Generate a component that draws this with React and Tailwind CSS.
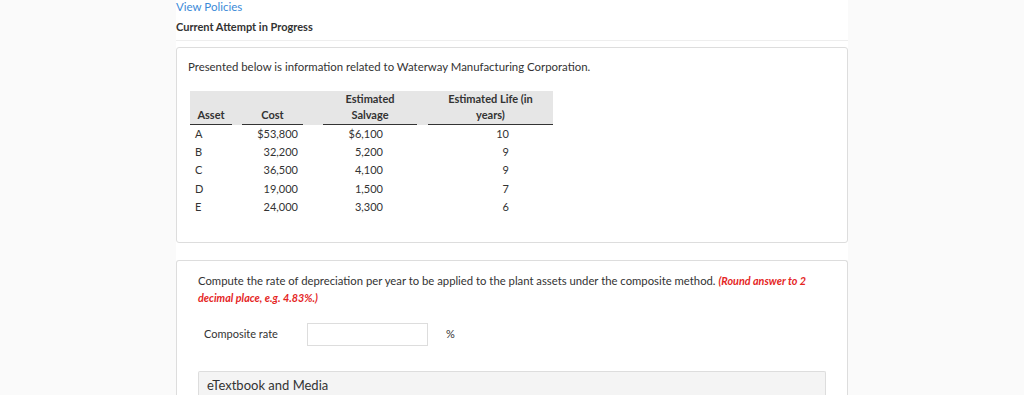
import React from 'react'

const rows = [
  { asset: 'A', cost: '$53,800', salvage: '$6,100', life: '10' },
  { asset: 'B', cost: '32,200', salvage: '5,200', life: '9' },
  { asset: 'C', cost: '36,500', salvage: '4,100', life: '9' },
  { asset: 'D', cost: '19,000', salvage: '1,500', life: '7' },
  { asset: 'E', cost: '24,000', salvage: '3,300', life: '6' }
]

const AssetTable = () => (
  <div className="w-[363px] text-[11px] text-[#333]">
    {/* header band */}
    <div className="flex h-[34px] bg-[#e6e6e6] font-bold leading-[16px]">
      <div className="flex w-[42px] items-end justify-center border-b border-[#333] pb-[1px]">Asset</div>
      <div className="w-[10px]" />
      <div className="flex w-[61px] items-end justify-center border-b border-[#333] pb-[1px]">Cost</div>
      <div className="w-[20px]" />
      <div className="flex w-[94px] items-end justify-center border-b border-[#333] pb-[1px] text-center">
        Estimated<br />Salvage
      </div>
      <div className="w-[11px]" />
      <div className="flex w-[125px] items-end justify-center border-b border-[#333] pb-[1px] text-center">
        Estimated Life (in<br />years)
      </div>
    </div>
    {rows.map((r) => (
      <div key={r.asset} className="flex h-[18.3px] items-center">
        <div className="w-[42px] pl-[5px]">{r.asset}</div>
        <div className="w-[10px]" />
        <div className="w-[61px] pr-[5px] text-right">{r.cost}</div>
        <div className="w-[20px]" />
        <div className="w-[94px] pr-[34px] text-right">{r.salvage}</div>
        <div className="w-[11px]" />
        <div className="w-[125px] pr-[44px] text-right">{r.life}</div>
      </div>
    ))}
  </div>
)

const App = () => {
  return (
    <div className="min-h-screen bg-[#fafafa] font-['Lato','Liberation_Sans',sans-serif]">
      <div className="mx-auto min-h-[395px] w-[672px] bg-white">
        <div className="h-[13px] text-[11.5px] leading-[13px] text-[#3b8ad8]">View Policies</div>
        <div className="border-b border-[#eeeeee] pt-[7px] pb-[6px] text-[11px] font-bold leading-[14px] text-[#333]">
          Current Attempt in Progress
        </div>

        {/* problem data */}
        <div className="mt-[6px] h-[196px] rounded-[3px] border border-[#dddddd] px-[11px] pt-[12px]">
          <p className="text-[11.4px] leading-[14px] text-[#333]">
            Presented below is information related to Waterway Manufacturing Corporation.
          </p>
          <div className="mt-[17px] ml-[2px]">
            <AssetTable />
          </div>
        </div>

        {/* question */}
        <div className="mt-[17px] rounded-t-[3px] border border-b-0 border-[#dddddd] px-[21px] pt-[11px] pb-[8px]">
          <p className="text-[11.3px] leading-[17px] text-[#333]">
            Compute the rate of depreciation per year to be applied to the plant assets under the composite method.{' '}
            <span className="text-[10.8px] font-bold italic text-[#e5261f]">(Round answer to 2 decimal place, e.g. 4.83%.)</span>
          </p>
          <div className="mt-[17px] flex items-center text-[11px] text-[#333]">
            <span className="w-[109px] pl-[6px]">Composite rate</span>
            <div className="h-[23px] w-[121px] border border-[#dddddd] bg-white" />
            <span className="ml-[18px]">%</span>
          </div>
          <div className="mt-[25px] h-[30px] rounded-t-[2px] border border-b-0 border-[#dddddd] bg-[#f4f4f4] px-[8px] pt-[4px] text-[13px] text-[#333]">
            eTextbook and Media
          </div>
        </div>
      </div>
    </div>
  )
}

export default App
